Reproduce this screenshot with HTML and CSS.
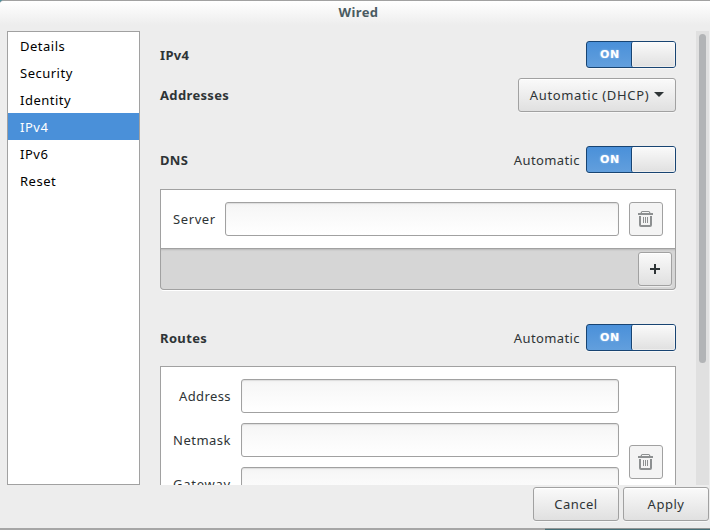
FILE: index.html
```
<!DOCTYPE html>
<html lang="en">
<head>
<meta charset="utf-8">
<title>Wired</title>
<link rel="stylesheet" href="styles.css">
</head>
<body>
<svg width="0" height="0" class="defs">
  <symbol id="trash" viewBox="0 0 16 16">
    <path d="M3 1 Q3.5 0 4.5 0 H10.5 Q11.5 0 12 1 L12.5 2 H15 V4 H0 V2 H2.5 Z M4 1 V2 H11 V1 Z" fill-rule="evenodd"/>
    <path d="M1 5 H3 V14 H12 V5 H14 V14 Q14 16 12 16 H3 Q1 16 1 14 Z"/>
    <path d="M5 6 H6 V12 H5 Z M7 6 H8 V12 H7 Z M9 6 H10 V12 H9 Z"/>
  </symbol>
</svg>
<div class="window">
  <header class="titlebar">Wired</header>
  <main class="body">
    <nav class="sidebar">
      <div class="item">Details</div>
      <div class="item">Security</div>
      <div class="item">Identity</div>
      <div class="item selected">IPv4</div>
      <div class="item">IPv6</div>
      <div class="item">Reset</div>
    </nav>
    <div class="content">
      <div class="row">
        <h2>IPv4</h2>
        <div class="switch"><span class="on">ON</span><span class="knob"></span></div>
      </div>
      <div class="row addresses">
        <h2>Addresses</h2>
        <button class="button combo"><span>Automatic (DHCP)</span><svg width="10" height="5" viewBox="0 0 10 5"><path d="M0 0H10L5 5Z"/></svg></button>
      </div>
      <div class="row dns">
        <h2>DNS</h2>
        <span class="auto">Automatic</span>
        <div class="switch"><span class="on">ON</span><span class="knob"></span></div>
      </div>
      <div class="list">
        <label class="field"><span class="server">Server</span><input class="entry"></label>
        <button class="button square disabled"><svg width="16" height="16"><use href="#trash"/></svg></button>
      </div>
      <div class="toolbar">
        <button class="button square"><svg width="16" height="16" viewBox="0 0 16 16"><path d="M7 3H9V7H13V9H9V13H7V9H3V7H7Z"/></svg></button>
      </div>
      <div class="row routes">
        <h2>Routes</h2>
        <span class="auto">Automatic</span>
        <div class="switch"><span class="on">ON</span><span class="knob"></span></div>
      </div>
      <div class="list route">
        <div class="fields">
          <label class="field"><span>Address</span><input class="entry"></label>
          <label class="field"><span class="netmask">Netmask</span><input class="entry"></label>
          <label class="field"><span class="gateway">Gateway</span><input class="entry"></label>
        </div>
        <button class="button square disabled"><svg width="16" height="16"><use href="#trash"/></svg></button>
      </div>
    </div>
    <div class="scrollbar"><div class="thumb"></div></div>
  </main>
  <footer class="actions">
    <button class="button">Cancel</button>
    <button class="button">Apply</button>
  </footer>
  <div class="edge"><div class="desktop"></div></div>
</div>
</body>
</html>
```

FILE: styles.css
```
* { box-sizing: border-box; }
body {
  margin: 0;
  background: #4e8f9c;
  color: #2e3436;
  font: 13px/18px "Noto Sans", "Open Sans", sans-serif;
  letter-spacing: .4px;
}
.defs { display: block; }
.window {
  display: flex;
  flex-direction: column;
  width: 710px;
  height: 530px;
  overflow: hidden;
  background: #ededed;
  border-top: 1px solid #a1a1a1;
  border-top-left-radius: 4px;
}
.titlebar {
  flex: none;
  height: 30px;
  padding-top: 2px;
  padding-left: 7px;
  background: linear-gradient(#fff, #ededed 24px);
  color: #4a5b62;
  font-weight: 700;
  text-align: center;
}
.body {
  display: flex;
  flex: none;
  height: 454px;
  padding-left: 7px;
}
.sidebar {
  width: 133px;
  background: #fff;
  border: 1px solid #a1a1a1;
  color: #000;
}
.item { height: 27px; padding: 5px 12px 0; letter-spacing: .5px; }
.selected { background: #4a90d9; color: #fff; }
.content {
  width: 556px;
  padding: 10px 20px 0;
  overflow: hidden;
}
.row { display: flex; align-items: center; height: 27px; }
.row h2 { flex: 1; margin: 0; font-size: 13px; line-height: 18px; letter-spacing: .35px; }
.addresses { height: 34px; margin-top: 10px; }
.dns { margin-top: 34px; margin-bottom: 16px; }
.routes { margin-top: 34px; margin-bottom: 15px; }
.auto { margin-right: 6px; }
.switch {
  display: flex;
  width: 90px;
  height: 27px;
  border: 1px solid #184472;
  border-radius: 3px;
  background: linear-gradient(#4a90d9, #629fdd);
  box-shadow: 0 1px #fff8;
}
.on {
  width: 44px;
  padding-top: 4px;
  padding-left: 2px;
  color: #fff;
  font: 700 11px/18px "DejaVu Sans", "Noto Sans", sans-serif;
  letter-spacing: .6px;
  text-align: center;
  text-shadow: 0 0 2px #a9cdf3;
}
.knob {
  flex: 1;
  border-left: 1px solid #184472;
  border-radius: 2px;
  background: linear-gradient(#fafafa, #e0e0e0);
  box-shadow: inset 0 0 0 1px #fff6;
}
.button {
  display: flex;
  align-items: center;
  justify-content: center;
  flex: none;
  width: 86px;
  height: 34px;
  padding: 0;
  border: 1px solid #a1a1a1;
  border-radius: 3px;
  background: linear-gradient(#fafafa, #e0e0e0);
  box-shadow: inset 0 1px #fff, 0 1px #fff8;
  color: #2e3436;
  font: inherit;
  letter-spacing: .5px;
}
.button svg { fill: #2e3436; }
.combo { width: 158px; gap: 5px; letter-spacing: .65px; }
.combo svg { margin-bottom: 2px; }
.square { width: 34px; }
.disabled { background: #f4f4f4; box-shadow: none; }
.disabled svg { fill: #8d9091; }
.list {
  display: flex;
  align-items: center;
  gap: 10px;
  height: 60px;
  padding: 0 12px;
  border: 1px solid #a1a1a1;
  background: #fff;
}
.field { display: flex; flex: 1; align-items: center; gap: 10px; }
.server { width: 42px; letter-spacing: .6px; }
.entry {
  flex: 1;
  min-width: 0;
  height: 34px;
  border: 1px solid #a1a1a1;
  border-radius: 3px;
  background: linear-gradient(#f3f3f3, #f7f7f7 5px, #fff);
  box-shadow: inset 0 1px 1px #ddd;
}
.toolbar {
  display: flex;
  justify-content: flex-end;
  height: 41px;
  padding: 3px;
  border: 1px solid #a1a1a1;
  border-top: 0;
  border-radius: 0 0 4px 4px;
  background: #d6d6d6;
  box-shadow: inset 0 2px 2px -1px #b9b9b9, 0 1px #fff;
}
.route { align-items: flex-start; height: 192px; padding-top: 12px; }
.route .button { margin-top: 66px; }
.fields { display: flex; flex: 1; flex-direction: column; gap: 10px; }
.route .field { flex: none; }
.route .field span { width: 58px; text-align: right; white-space: nowrap; }
.route .field .netmask { letter-spacing: .5px; }
.route .field .gateway { letter-spacing: .75px; }
.scrollbar { width: 13px; padding: 3px; background: #e0e0e0; }
.thumb { width: 7px; height: 329px; border-radius: 4px; background: #b2b4b6; }
.actions {
  display: flex;
  justify-content: flex-end;
  gap: 4px;
  height: 43px;
  padding: 2px 1px 0 0;
}
.edge { flex: none; height: 2px; background: #a6a6a6; }
.desktop { width: 165px; height: 2px; margin-left: auto; border-top: 1px solid #929696; background: #487078; }
```
